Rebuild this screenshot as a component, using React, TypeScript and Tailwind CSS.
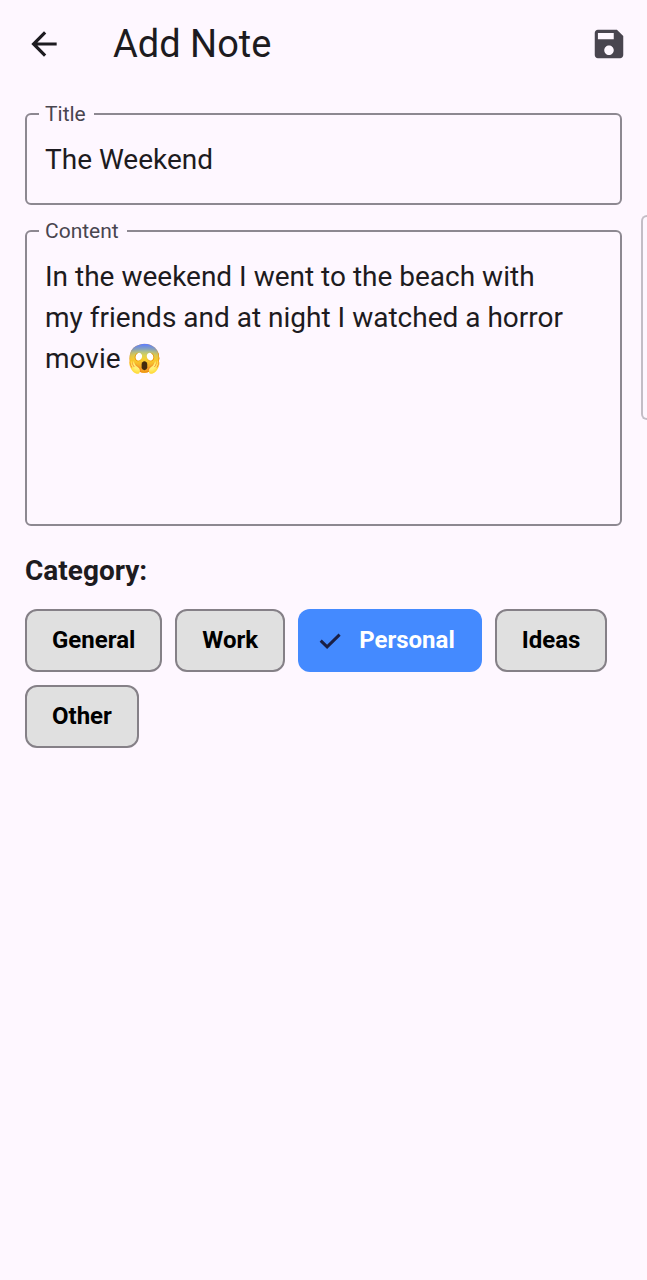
import { useState } from "react";

const categories = ["General", "Work", "Personal", "Ideas", "Other"];

const fieldClass =
  "min-w-0 rounded-md border-2 border-[#8d8891] px-3";
const legendClass = "pr-2 pl-[6px] text-[21px] leading-6 text-[#49454f]";

export default function App() {
  const [title, setTitle] = useState("The Weekend");
  const [content, setContent] = useState(
    "In the weekend I went to the beach with my friends and at night I watched a horror movie 😱"
  );
  const [selected, setSelected] = useState("Personal");

  return (
    <div className="relative min-h-screen overflow-hidden bg-[#fef7ff] font-['Roboto','Noto_Color_Emoji',sans-serif] text-[#1d1b20]">
      <header className="flex h-[88px] items-center pr-[19px] pl-[25px]">
        <button type="button" aria-label="Back" className="shrink-0">
          <svg viewBox="0 0 24 24" className="size-[38px]" fill="currentColor">
            <path d="M20 11H7.83l5.59-5.59L12 4l-8 8 8 8 1.41-1.41L7.83 13H20v-2z" />
          </svg>
        </button>
        <h1 className="ml-[50px] flex-1 text-[38px] leading-[50px]">Add Note</h1>
        <button type="button" aria-label="Save" className="shrink-0 text-[#49454f]">
          <svg viewBox="0 0 24 24" className="size-[38px]" fill="currentColor">
            <path d="M17 3H5c-1.11 0-2 .9-2 2v14c0 1.1.89 2 2 2h14c1.1 0 2-.9 2-2V7l-4-4zm-5 16c-1.66 0-3-1.34-3-3s1.34-3 3-3 3 1.34 3 3-1.34 3-3 3zm3-10H5V5h10v4z" />
          </svg>
        </button>
      </header>

      <main className="flex flex-col gap-[14px] px-[25px] pt-[14px]">
        <fieldset className={`${fieldClass} pb-[11px]`}>
          <legend className={legendClass}>
            <label htmlFor="title" className="block">Title</label>
          </legend>
          <input
            id="title"
            value={title}
            onChange={(e) => setTitle(e.target.value)}
            className="block h-[66px] w-full bg-transparent px-[6px] text-[28px] outline-none"
          />
        </fieldset>

        <fieldset className={fieldClass}>
          <legend className={legendClass}>
            <label htmlFor="content" className="block">Content</label>
          </legend>
          <textarea
            id="content"
            rows={6}
            value={content}
            onChange={(e) => setContent(e.target.value)}
            className="block w-full resize-none overflow-hidden bg-transparent pt-[13px] pr-9 pb-[22px] pl-[6px] text-[28px] leading-[41px] outline-none"
          />
        </fieldset>

        <section className="pt-[13px]">
          <h2 className="text-[28px] leading-9 font-bold">Category:</h2>
          <div className="mt-5 flex flex-wrap gap-[13px]">
            {categories.map((name) => {
              const active = name === selected;
              return (
                <button
                  key={name}
                  type="button"
                  aria-pressed={active}
                  onClick={() => setSelected(name)}
                  className={
                    active
                      ? "flex h-[63px] items-center rounded-xl bg-[#448aff] pr-[27px] pb-[2px] pl-[21px] text-2xl font-bold text-white"
                      : "flex h-[63px] items-center rounded-xl border-2 border-[#858087] bg-[#e0e0e0] px-[25px] pb-[2px] text-2xl font-bold text-black"
                  }
                >
                  {active && (
                    <svg
                      viewBox="0 0 24 24"
                      className="mr-4 size-6 text-[#1a1f45]"
                      fill="none"
                      stroke="currentColor"
                      strokeWidth="3"
                    >
                      <path d="M1.7 12.6l6.4 6.2L20.6 6.6" />
                    </svg>
                  )}
                  {name}
                </button>
              );
            })}
          </div>
        </section>
      </main>

      <div className="absolute top-[215px] right-0 h-[205px] w-[6px] rounded-l-md border-2 border-r-0 border-[#c3bdc6]" />
    </div>
  );
}
